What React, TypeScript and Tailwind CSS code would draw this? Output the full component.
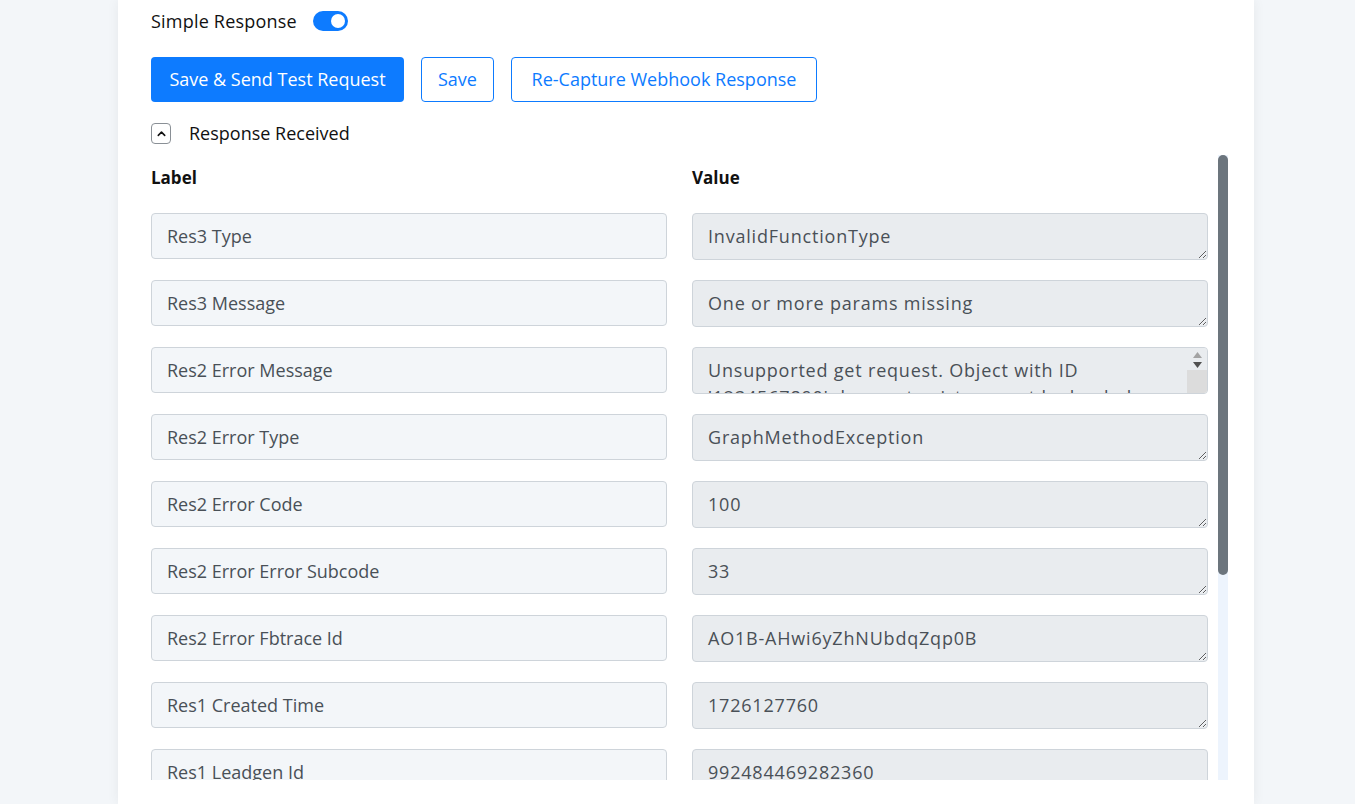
import React from "react";

const rows: { label: string; value: string }[] = [
  { label: "Res3 Type", value: "InvalidFunctionType" },
  { label: "Res3 Message", value: "One or more params missing" },
  {
    label: "Res2 Error Message",
    value:
      "Unsupported get request. Object with ID '1234567890' does not exist, cannot be loaded due to missing permissions, or does not support this operation.",
  },
  { label: "Res2 Error Type", value: "GraphMethodException" },
  { label: "Res2 Error Code", value: "100" },
  { label: "Res2 Error Error Subcode", value: "33" },
  { label: "Res2 Error Fbtrace Id", value: "AO1B-AHwi6yZhNUbdqZqp0B" },
  { label: "Res1 Created Time", value: "1726127760" },
  { label: "Res1 Leadgen Id", value: "992484469282360" },
  { label: "Res1 Page Id", value: "104482385912345" },
  { label: "Res1 Form Id", value: "1043782940517688" },
  { label: "Res1 Field", value: "leadgen" },
  { label: "Res1 Object", value: "page" },
];

export default function App() {
  return (
    <div
      className="min-h-[804px] w-full bg-[#f3f6f9] text-[#212529]"
      style={{ fontFamily: "'Open Sans', 'Noto Sans', sans-serif" }}
    >
      <div className="ml-[118px] w-[1136px] bg-white shadow-[0_0_12px_rgba(0,0,0,0.06)] pl-[33px] pr-[26px] pt-[9px] pb-[24px]">
        <div className="flex h-[24px] items-center gap-[16px]">
          <span className="text-[18px] tracking-[0.2px] text-[#111]">Simple Response</span>
          <span className="relative inline-flex h-[20px] w-[35px] items-center rounded-full bg-[#0d7bff]">
            <span className="absolute right-[3px] h-[14px] w-[14px] rounded-full bg-white" />
          </span>
        </div>

        <div className="mt-[24px] flex gap-[17px]">
          <button className="h-[45px] w-[253px] rounded-[4px] bg-[#0d7bff] text-[18px] font-medium text-white">
            Save &amp; Send Test Request
          </button>
          <button className="h-[45px] w-[73px] rounded-[4px] border border-[#0d7bff] bg-white text-[18px] font-medium text-[#0d7bff]">
            Save
          </button>
          <button className="h-[45px] w-[306px] rounded-[4px] border border-[#0d7bff] bg-white text-[18px] font-medium text-[#0d7bff]">
            Re-Capture Webhook Response
          </button>
        </div>

        <div className="mt-[21px] flex h-[21px] items-center gap-[18px]">
          <span className="flex h-[21px] w-[20px] items-center justify-center rounded-[4px] border border-[#8a9096]">
            <svg width="11" height="11" viewBox="0 0 24 24" fill="none" stroke="#111" strokeWidth="3.5" strokeLinecap="round" strokeLinejoin="round">
              <path d="M5 16l7-7 7 7" />
            </svg>
          </span>
          <span className="text-[18px] text-[#111]">Response Received</span>
        </div>

        <div className="mt-[11px] flex h-[625px] gap-[10px]">
          <div className="w-[1057px] overflow-hidden">
            <div className="grid grid-cols-2 gap-x-[25px] pt-[11px] pb-[23px] text-[17px] font-bold leading-[24px] text-[#111]">
              <div>Label</div>
              <div>Value</div>
            </div>
            <div className="flex flex-col gap-[20px]">
              {rows.map((r) => {
                const long = r.value.length > 60;
                return (
                  <div key={r.label} className="grid grid-cols-2 items-start gap-x-[25px]">
                    <input
                      readOnly
                      value={r.label}
                      className="h-[46px] w-full rounded-[4px] border border-[#ced4da] bg-[#f3f6f9] px-[15px] text-[18px] text-[#495057] outline-none"
                    />
                    <div className="relative">
                      <textarea
                        readOnly
                        value={r.value}
                        rows={1}
                        className={`block h-[47px] w-full resize overflow-hidden rounded-[4px] border border-[#ced4da] bg-[#e9ecef] py-[9px] pl-[15px] text-[18px] leading-[27px] tracking-[0.8px] text-[#495057] outline-none ${long ? "pr-[36px]" : "pr-[15px]"}`}
                      />
                      {long && (
                        <div className="pointer-events-none absolute top-[1px] right-[1px] flex h-[45px] w-[20px] flex-col rounded-tr-[3px] rounded-br-[3px] bg-[#e9ecef]">
                          <div className="flex h-[22px] flex-col items-center justify-center gap-[4px] pt-[1px]">
                            <svg width="9" height="6" viewBox="0 0 9 6"><path d="M0 6L4.5 0L9 6Z" fill="#a3a3a3" /></svg>
                            <svg width="9" height="6" viewBox="0 0 9 6"><path d="M0 0L4.5 6L9 0Z" fill="#505050" /></svg>
                          </div>
                          <div className="flex-1 rounded-br-[3px] bg-[#dcdcdc]" />
                        </div>
                      )}
                    </div>
                  </div>
                );
              })}
            </div>
          </div>
          <div className="flex w-[10px] flex-col bg-[#edf4fd]">
            <div className="h-[420px] rounded-full bg-[#6c757d]" />
          </div>
        </div>
      </div>
    </div>
  );
}
